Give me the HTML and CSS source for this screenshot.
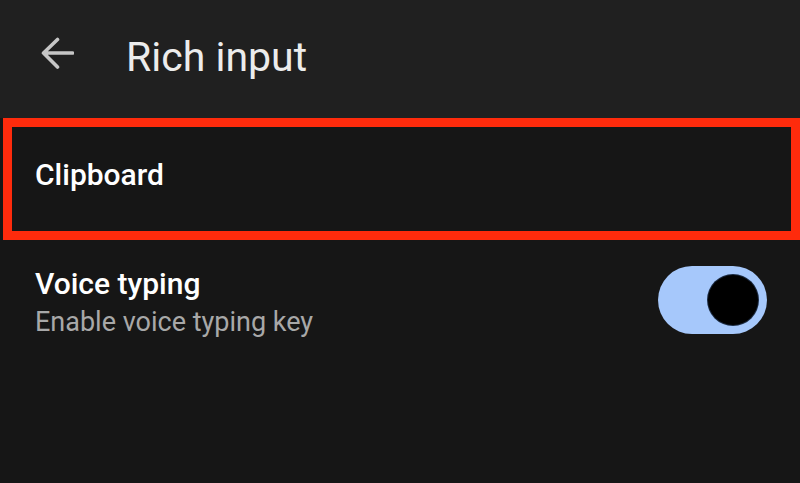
FILE: index.html
```html
<!DOCTYPE html>
<html lang="en">
<head>
<meta charset="utf-8">
<title>Rich input</title>
<link rel="stylesheet" href="styles.css">
</head>
<body>
<header class="topbar">
  <svg class="back" viewBox="0 0 34 34" width="34" height="34" aria-hidden="true">
    <path d="M32.5 17H3.5M17.5 3.5L3.5 17l14 14" fill="none" stroke="#c6c6c6" stroke-width="3.6" stroke-linecap="round" stroke-linejoin="round"/>
  </svg>
  <h1 class="title">Rich input</h1>
</header>
<main class="list">
  <div class="item item-highlight">
    <div class="item-title">Clipboard</div>
  </div>
  <div class="item item-switch">
    <div class="item-text">
      <div class="item-title">Voice typing</div>
      <div class="item-sub">Enable voice typing key</div>
    </div>
    <div class="switch"><div class="thumb"></div></div>
  </div>
</main>
</body>
</html>
```
FILE: styles.css
```css
html, body {
  margin: 0;
  padding: 0;
}
body {
  width: 800px;
  height: 483px;
  overflow: hidden;
  background: #161616;
  font-family: Roboto, "Noto Sans", "Liberation Sans", sans-serif;
  color: #ffffff;
}
.topbar {
  height: 118px;
  box-sizing: border-box;
  background: #202020;
  display: flex;
  align-items: flex-start;
  padding: 33px 0 0 40px;
}
.back {
  display: block;
  margin-top: 3px;
  flex: none;
}
.title {
  margin: 0 0 0 52px;
  font-size: 41px;
  font-weight: 400;
  line-height: 48px;
  color: #ececec;
}
.list {
  display: flex;
  flex-direction: column;
}
.item-highlight {
  margin-left: 3px;
  height: 122px;
  box-sizing: border-box;
  border: 9px solid #fe2b0c;
  padding: 30px 0 0 23px;
  background: #161616;
}
.item-title {
  font-size: 30px;
  font-weight: 500;
  line-height: 36px;
  color: #ffffff;
}
.item-switch {
  display: flex;
  align-items: center;
  justify-content: space-between;
  padding: 26px 33px 0 35px;
}
.item-sub {
  margin-top: 5px;
  font-size: 27px;
  line-height: 30px;
  color: #a8a8a8;
}
.switch {
  width: 109px;
  height: 68px;
  border-radius: 34px;
  background: #a6c8fb;
  display: flex;
  align-items: center;
  justify-content: flex-end;
  padding-right: 9px;
  box-sizing: border-box;
  margin-top: -4px;
}
.thumb {
  width: 50px;
  height: 50px;
  border-radius: 50%;
  background: #000000;
  box-shadow: 0 0 0 1px #1b2a40;
}
```
